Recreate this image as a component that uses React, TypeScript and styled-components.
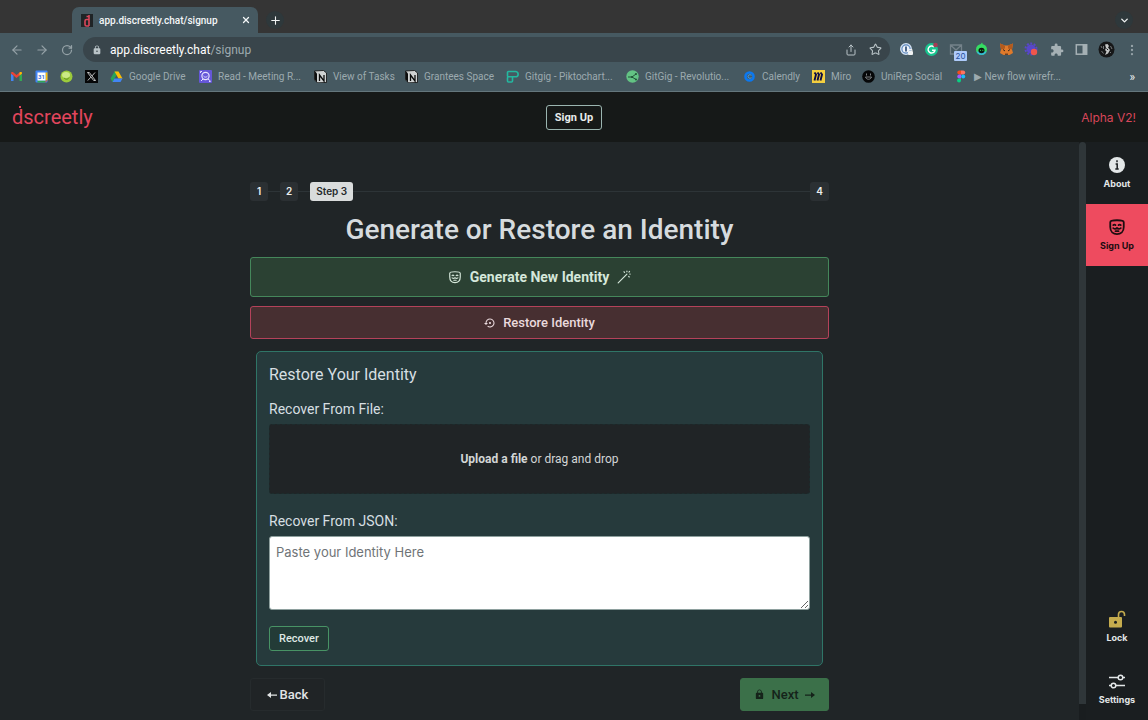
import React from "react";
import styled, { createGlobalStyle } from "styled-components";
import { ArrowLeft, ArrowRight, ChevronDown, MoreVertical, Plus, RotateCw, Share, Star, X } from "lucide-react";
import { MdExtension, MdLock, MdSettingsBackupRestore } from "react-icons/md";

const ui = `Inter, "Liberation Sans", sans-serif`;
const square = `Roboto, "Liberation Sans", sans-serif`;

const GlobalStyle = createGlobalStyle`
  *, *::before, *::after { box-sizing: border-box; }
  body { margin: 0; background: #202527; font-family: ${square}; color: #dfe3e4; }
  button, textarea, input { font-family: inherit; }
  button { cursor: pointer; }
  svg { flex: none; display: block; }
`;

const Shell = styled.div`
  display: flex;
  flex-direction: column;
  min-height: 100vh;
`;

/* ---------- browser frame ---------- */

const TabStrip = styled.div`
  display: flex;
  align-items: flex-end;
  height: 33px;
  padding: 0 15px 0 72px;
  background: #353535;
`;

const Tab = styled.div`
  display: flex;
  align-items: center;
  gap: 6px;
  width: 186px;
  height: 26px;
  padding: 0 4px 0 9px;
  border-radius: 7px 7px 0 0;
  background: #465961;
  color: #f4f7f8;
  font: 500 10px ${square};
`;

const TabTitle = styled.span`
  flex: 1;
  white-space: nowrap;
`;

const StripButton = styled.button<{ $push?: boolean }>`
  display: flex;
  align-items: center;
  justify-content: center;
  width: 18px;
  height: 18px;
  margin: 0 0 4px ${(p) => (p.$push ? "auto" : "8px")};
  padding: 0;
  border: 0;
  border-radius: 50%;
  background: #2e383b;
  color: #f0f3f3;
`;

const PlainButton = styled.button`
  display: flex;
  align-items: center;
  justify-content: center;
  flex: none;
  width: 17px;
  height: 17px;
  padding: 0;
  border: 0;
  background: none;
  color: inherit;
`;

const Toolbar = styled.div`
  display: flex;
  align-items: center;
  gap: 8px;
  height: 33px;
  padding: 0 8px;
  background: #465961;
  color: #95a2a7;
`;

const Omnibox = styled.div`
  display: flex;
  align-items: center;
  flex: 1;
  gap: 8px;
  height: 25px;
  padding: 0 6px 0 9px;
  border-radius: 13px;
  background: #39454b;
  color: #b9c3c7;
`;

const Address = styled.div`
  flex: 1;
  font: 400 12px ${square};
  color: #9eabb0;

  b { font-weight: 400; color: #fff; }
`;

const BookmarkBar = styled.nav`
  display: flex;
  align-items: center;
  gap: 12px;
  height: 26px;
  padding: 0 13px 4px 10px;
  border-bottom: 1px solid #64767c;
  background: #465961;
  font: 400 10px ${square};
  color: #9caaaf;
`;

const Bookmark = styled.a<{ $width?: number }>`
  display: flex;
  align-items: center;
  flex: none;
  gap: 6px;
  width: ${(p) => (p.$width ? `${p.$width}px` : "13px")};
  color: inherit;
  text-decoration: none;
  white-space: nowrap;
`;

const More = styled.span`
  margin-left: auto;
  color: #f0f3f3;
  font-size: 12px;
`;

/* ---------- app ---------- */

const Header = styled.header`
  display: grid;
  grid-template-columns: 1fr auto 1fr;
  align-items: center;
  height: 50px;
  padding: 0 12px;
  background: #161918;
`;

const Brand = styled.a`
  position: relative;
  justify-self: start;
  color: #e2465d;
  font-size: 20px;
  line-height: 24px;
  text-decoration: none;

  &::before {
    content: "";
    position: absolute;
    top: 1px;
    left: 7px;
    width: 2px;
    height: 2px;
    background: currentColor;
  }
`;

const HeaderButton = styled.button`
  height: 25px;
  padding: 0 8px;
  border: 1px solid #9bb5b0;
  border-radius: 3px;
  background: #161918;
  color: #e8eceb;
  font-size: 11px;
  font-weight: 700;
`;

const Version = styled.span`
  justify-self: end;
  color: #d8465a;
  font: 400 12px ${ui};
`;

const Body = styled.div`
  display: flex;
  flex: 1;
`;

const Main = styled.main`
  flex: 1;
  padding: 40px 24px 8px;
`;

const ScrollTrack = styled.div`
  width: 7px;
  padding-bottom: 16px;
  background: #191d1f;
`;

const ScrollThumb = styled.div`
  height: 100%;
  border-radius: 4px 4px 0 0;
  background: #2f3639;
`;

const Rail = styled.aside`
  display: flex;
  flex-direction: column;
  width: 62px;
  background: #1a1e20;
`;

const RailItem = styled.a<{ $active?: boolean; $push?: boolean }>`
  display: flex;
  flex-direction: column;
  align-items: center;
  justify-content: center;
  gap: 3px;
  height: 62px;
  margin-top: ${(p) => (p.$push ? "auto" : "0")};
  background: ${(p) => (p.$active ? "#ee4b5f" : "transparent")};
  color: ${(p) => (p.$active ? "#1d0d10" : "#e3e7e8")};
  font: 700 9px/14px ${ui};
  text-decoration: none;
`;

const Column = styled.div`
  display: flex;
  flex-direction: column;
  max-width: 579px;
  margin: 0 auto;
`;

const Stepper = styled.ol`
  display: flex;
  align-items: center;
  margin: 0;
  padding: 0;
  list-style: none;
`;

const Step = styled.li<{ $current?: boolean; $last?: boolean }>`
  display: flex;
  align-items: center;
  flex: ${(p) => (p.$current ? 1 : "none")};

  &::after {
    content: "";
    display: ${(p) => (p.$last ? "none" : "block")};
    flex: ${(p) => (p.$current ? 1 : "none")};
    width: 12px;
    height: 1px;
    background: #2d3437;
  }
`;

const StepBadge = styled.span<{ $current?: boolean }>`
  min-width: 18px;
  padding: 0 6px;
  border-radius: 3px;
  background: ${(p) => (p.$current ? "#d9dcdc" : "#2b3033")};
  color: ${(p) => (p.$current ? "#25292b" : "#eceeee")};
  font: 600 10px/19px ${ui};
  text-align: center;
`;

const Title = styled.h1`
  margin: 9px 0 7px;
  font-size: 28px;
  font-weight: 500;
  line-height: 40px;
  text-align: center;
  color: #d6dbde;
`;

const Choice = styled.button<{ $tone: "green" | "red" }>`
  display: flex;
  align-items: center;
  justify-content: center;
  gap: ${(p) => (p.$tone === "green" ? 8 : 7)}px;
  height: ${(p) => (p.$tone === "green" ? 40 : 33)}px;
  margin-bottom: ${(p) => (p.$tone === "green" ? 9 : 12)}px;
  border: 1px solid ${(p) => (p.$tone === "green" ? "#45875b" : "#b4425a")};
  border-radius: 3px;
  background: ${(p) => (p.$tone === "green" ? "#2b4133" : "#472f31")};
  color: ${(p) => (p.$tone === "green" ? "#d5e7da" : "#eadadd")};
  font-size: ${(p) => (p.$tone === "green" ? 14 : 13)}px;
  font-weight: ${(p) => (p.$tone === "green" ? 700 : 500)};
`;

const Card = styled.section`
  display: flex;
  flex-direction: column;
  align-items: flex-start;
  margin: 0 6px 12px;
  padding: 12px 12px 14px;
  border: 1px solid #2f7567;
  border-radius: 5px;
  background: #263a3c;
  color: #d6dfe2;
`;

const CardTitle = styled.h2`
  margin: 0 0 12px;
  font-size: 16px;
  font-weight: 400;
  line-height: 22px;
`;

const FieldLabel = styled.label`
  margin-bottom: 4px;
  font-size: 14px;
  line-height: 22px;
`;

const DropZone = styled.label`
  display: flex;
  align-items: center;
  justify-content: center;
  gap: 3px;
  align-self: stretch;
  height: 70px;
  margin-bottom: 16px;
  border: 1px dashed #1c2b2c;
  border-radius: 3px;
  background: #202426;
  color: #d3d6d6;
  font-size: 12px;
  cursor: pointer;

  b { font-weight: 700; }
`;

const HiddenFile = styled.input`
  position: absolute;
  width: 1px;
  height: 1px;
  opacity: 0;
`;

const JsonBox = styled.textarea`
  display: block;
  align-self: stretch;
  height: 74px;
  margin-bottom: 16px;
  padding: 6px;
  border: 1px solid #8ea09e;
  border-radius: 3px;
  background: #fff;
  font: 400 13px/18px ${ui};
  resize: vertical;

  &::placeholder { color: #6f7477; }
`;

const RecoverButton = styled.button`
  height: 25px;
  padding: 0 9px;
  border: 1px solid #489365;
  border-radius: 3px;
  background: #233b37;
  color: #dfe8e5;
  font-size: 11px;
  font-weight: 500;
`;

const Footer = styled.div`
  display: flex;
  justify-content: space-between;
`;

const NavButton = styled.button<{ $primary?: boolean }>`
  display: flex;
  align-items: center;
  justify-content: center;
  gap: ${(p) => (p.$primary ? 6 : 3)}px;
  min-width: ${(p) => (p.$primary ? 89 : 75)}px;
  height: 33px;
  border: 1px solid ${(p) => (p.$primary ? "#3b7049" : "#262b2d")};
  border-radius: 3px;
  background: ${(p) => (p.$primary ? "#3b7049" : "#202426")};
  color: ${(p) => (p.$primary ? "#15231a" : "#e2e5e6")};
  font-size: 13px;
  font-weight: 500;
`;

/* ---------- drawings ---------- */

const MaskIcon = ({ size, weight = 2 }: { size: number; weight?: number }) => (
  <svg width={size} height={size} viewBox="0 0 24 24" fill="none" stroke="currentColor" strokeWidth={weight} strokeLinecap="round" strokeLinejoin="round">
    <path d="M3 5.500C3 3.500 5 3 12 3s9 .5 9 2.500V12c0 6-4 9.500-9 9.500S3 18 3 12Z" />
    <path d="M7 9.500c.8-.9 2.200-.9 3 0M14 9.500c.8-.9 2.200-.9 3 0M7 13.500c2 1.500 4 .8 5-.3 1 1.100 3 1.800 5 .3M10 17.500h4" />
  </svg>
);

const WandIcon = () => (
  <svg width="14" height="14" viewBox="0 0 24 24" fill="none" stroke="currentColor" strokeWidth="2" strokeLinecap="round">
    <path d="M2 22 17 7M12 3l1 1M20 11l1 1M17 2v1M22.500 7H22M21.500 2.500 20.500 3.500" />
  </svg>
);

const InfoIcon = () => (
  <svg width="18" height="18" viewBox="0 0 18 18">
    <circle cx="9" cy="9" r="8" fill="currentColor" />
    <path d="M9 4.300v2M7.600 8H9.200v5M7.300 13h3.400" stroke="#1a1e20" strokeWidth="1.500" fill="none" />
  </svg>
);

const OpenLockIcon = () => (
  <svg width="18" height="18" viewBox="0 0 18 18">
    <path d="M10.500 7V4.500a3 3 0 0 1 6 0V6" fill="none" stroke="#c5ac4e" strokeWidth="1.600" />
    <rect x="1" y="7" width="13" height="10.500" rx="1" fill="#c5ac4e" />
    <circle cx="7.500" cy="12.200" r="1.500" fill="#1a1e20" />
  </svg>
);

const SlidersIcon = () => (
  <svg width="18" height="18" viewBox="0 0 18 18" fill="none" stroke="currentColor" strokeWidth="1.500">
    <path d="M1 5.500h9M15 5.500h2M1 13.500h2M8 13.500h9" />
    <circle cx="12.500" cy="5.500" r="2.300" />
    <circle cx="5.500" cy="13.500" r="2.300" />
  </svg>
);

const SmallArrow = ({ back }: { back?: boolean }) => (
  <svg width="10" height="8" viewBox="0 0 10 8" fill="currentColor">
    <path d={back ? "M0 4 4 1v2.400h6v1.300H4V7Z" : "M10 4 6 1v2.400H0v1.300h6V7Z"} />
  </svg>
);

const Favicon = () => (
  <svg width="12" height="13" viewBox="0 0 12 13">
    <rect width="12" height="13" fill="#1f2426" />
    <path d="M8 1v11M8 5.500H5.500a1.500 1.500 0 0 0-1.500 1.500v3.500A1.500 1.500 0 0 0 5.500 12H8M5.500 2.500h3" fill="none" stroke="#d9465b" strokeWidth="1.600" />
  </svg>
);

const Mark = ({ children }: { children: React.ReactNode }) => (
  <svg width="13" height="13" viewBox="0 0 13 13" fill="none">{children}</svg>
);

const Gmail = () => (
  <Mark>
    <path d="M1 11V3.500l2.500 2V11Z" fill="#4285f4" />
    <path d="M9.500 11V5.500l2.500-2V11Z" fill="#34a853" />
    <path d="M1 3.500C1 2 2.500 1.800 3.500 2.500l3 2.400 3-2.400C10.500 1.800 12 2 12 3.500L6.500 8Z" fill="#ea4335" />
    <path d="M9.500 2.500C10.500 1.800 12 2 12 3.500l-2.500 2Z" fill="#fbbc04" />
  </Mark>
);

const Calendar = () => (
  <Mark>
    <rect x=".5" y=".5" width="12" height="12" rx="1" fill="#4285f4" />
    <path d="M10.500 2.500h2v8h-2Z" fill="#fbbc04" />
    <path d="M2.500 10.500h8v2h-8Z" fill="#34a853" />
    <path d="M10.500 10.500h2l-2 2Z" fill="#ea4335" />
    <rect x="2.500" y="2.500" width="8" height="8" fill="#fff" />
    <text x="6.500" y="8.800" fontSize="6" fontWeight="700" textAnchor="middle" fill="#3972d9" fontFamily="Roboto, sans-serif">31</text>
  </Mark>
);

const Lime = () => (
  <Mark>
    <circle cx="6.500" cy="6.500" r="6" fill="#9ccb3b" />
    <ellipse cx="6" cy="5" rx="4" ry="3" fill="#cbe986" />
    <path d="M4 8c2 2 4 1.500 5-.5" stroke="#5f8f22" />
  </Mark>
);

const XMark = () => (
  <Mark>
    <rect width="13" height="13" fill="#060708" />
    <path d="M2.500 2.500h1.800l6.200 8H8.700ZM10 2.500l-3 3.400M5.800 7.200l-3 3.300" stroke="#e8eaea" strokeWidth=".8" />
  </Mark>
);

const Drive = () => (
  <Mark>
    <path d="M4.500 1.500h4L4 9.500l-1.500 2.500L.5 8.500Z" fill="#28a35a" />
    <path d="M4.500 1.500h4l4 7h-4Z" fill="#fbbc04" />
    <path d="M4.500 8.500h8l-2 3.500h-8Z" fill="#4285f4" />
  </Mark>
);

const ReadMark = () => (
  <Mark>
    <rect width="13" height="13" rx="1" fill="#6557d8" />
    <circle cx="6.500" cy="6" r="3.600" stroke="#e6e3ff" strokeWidth="1.200" />
    <path d="M4.500 6c1 1.500 3 1.500 4 0M2 11l2-2M9 9l2.500 2M1.500 3V1.500H3M10 11.500h1.500" stroke="#e6e3ff" />
  </Mark>
);

const Notion = () => (
  <Mark>
    <path d="M.5 1 9.500.5l3 2.500v9.500l-9 .3-3-3Z" fill="#cfd2d2" stroke="#0c0d0d" strokeWidth=".8" />
    <path d="M.8 1 3 3.500v9L.8 9.500Z" fill="#0c0d0d" />
    <path d="M5.500 11V5l4.500 6V5" stroke="#0c0d0d" strokeWidth="1.300" />
  </Mark>
);

const Pikto = () => (
  <Mark>
    <path d="M1.500 6.500v-4a1 1 0 0 1 1-1H9.500a2.500 2.500 0 0 1 0 5.300H2.500a1 1 0 0 0-1 1V11a1 1 0 0 0 1 1h3a1 1 0 0 0 1-1V6.800" stroke="#24b8a0" strokeWidth="1.600" />
  </Mark>
);

const GitGig = () => (
  <Mark>
    <circle cx="6.500" cy="6.500" r="6.200" fill="#63c384" />
    <path d="M2 7h4l4-3M6 7l4 2.500" stroke="#225238" />
    <circle cx="6" cy="7" r="1.100" fill="#225238" />
    <circle cx="10" cy="4" r="1" fill="#225238" />
    <circle cx="10" cy="9.500" r="1" fill="#225238" />
  </Mark>
);

const Calendly = () => (
  <Mark>
    <circle cx="6.500" cy="6.500" r="4" stroke="#0b78f0" strokeWidth="2.600" />
    <path d="M8.500 5.300c-1.500-1-3.500-.6-3.500 1.200s2 2.200 3.500 1.200" stroke="#3fa6ff" />
  </Mark>
);

const Miro = () => (
  <Mark>
    <rect width="13" height="13" fill="#f4cf3f" />
    <path d="m2.500 2.500 1.500 2-1.500 6M5.500 2.500l1.500 2-1.500 6M8.500 2.500l1.500 2-1.500 6" stroke="#0b0b45" strokeWidth="1.900" />
  </Mark>
);

const UniRep = () => (
  <Mark>
    <circle cx="6.500" cy="6.500" r="6.300" fill="#060708" />
    <path d="M4.500 3.500v2M8.500 3.500v2M3.500 7c.8 3 5.200 3 6 0Z" stroke="#8c9193" strokeWidth=".9" />
  </Mark>
);

const Figma = () => (
  <Mark>
    <path d="M6 .5H4.300a2 2 0 0 0 0 4H6Z" fill="#f24e1e" />
    <path d="M6 .5h2.200a2 2 0 0 1 0 4H6Z" fill="#ff7262" />
    <path d="M6 4.500H4.300a2 2 0 0 0 0 4H6Z" fill="#a259ff" />
    <circle cx="8.200" cy="6.500" r="2" fill="#1abcfe" />
    <path d="M6 8.500H4.300a2 2 0 1 0 1.700 2Z" fill="#0acf83" />
  </Mark>
);

const ExtIcon = ({ children }: { children: React.ReactNode }) => (
  <svg width="17" height="17" viewBox="0 0 17 17" fill="none" overflow="visible">{children}</svg>
);

const OnePassword = () => (
  <ExtIcon>
    <circle cx="8" cy="8" r="5.300" fill="#5b87bd" stroke="#d5e3f3" strokeWidth="1.300" />
    <circle cx="8" cy="8" r="3.500" fill="#eef4fb" />
    <path d="M8 5.500v5" stroke="#24446d" strokeWidth="1.600" />
    <rect x="10" y="10" width="5" height="4" rx="1" fill="#eef1f2" />
    <path d="M11 10V8.500h3V10" stroke="#eef1f2" />
  </ExtIcon>
);

const Grammarly = () => (
  <ExtIcon>
    <circle cx="8.500" cy="8.500" r="6.500" fill="#18c48f" />
    <path d="M11 6a3.500 3.500 0 1 0 1 3.300H9" stroke="#fff" strokeWidth="1.400" />
    <circle cx="12.500" cy="4" r="2.300" fill="#a63b54" />
  </ExtIcon>
);

const MailBadge = () => (
  <ExtIcon>
    <path d="M2.500 4h11v9h-11ZM2.500 4 8 9l5.500-5" stroke="#74828a" strokeWidth="1.300" />
    <rect x="6" y="10" width="13" height="10" rx="1" fill="#aecbfa" />
    <text x="12.500" y="17.800" textAnchor="middle" fontSize="8" fill="#27509b" fontFamily="Inter, sans-serif">20</text>
  </ExtIcon>
);

const GreenFace = () => (
  <ExtIcon>
    <circle cx="8.500" cy="8.500" r="5.500" fill="#35dd62" />
    <path d="M3.500 10.500A5.500 5.500 0 0 0 8.500 14a5.500 5.500 0 0 0 5-3.500Z" fill="#35b9d5" />
    <path d="M7.500 3.500 9 1.500l1 2" fill="#35dd62" />
    <ellipse cx="8.500" cy="9.500" rx="3" ry="2.800" fill="#0c1710" />
    <path d="M7 9.300h1M9.300 9.300h1" stroke="#35dd62" />
  </ExtIcon>
);

const Fox = () => (
  <ExtIcon>
    <path d="m2 2.500 5 2h3l5-2-1 6 1 3.500-3.500 2H5.500L2 12l1-3.500Z" fill="#df7a2b" />
    <path d="m2 2.500 5 2v3l-4 1ZM15 2.500l-5 2v3l4 1Z" fill="#b35a1d" />
    <path d="M5 8.500 7 10M12 8.500 10 10M7 13.200h3" stroke="#39241a" />
  </ExtIcon>
);

const PurpleGear = () => (
  <ExtIcon>
    <circle cx="8" cy="8" r="4.500" fill="#5747c9" />
    <circle cx="8" cy="8" r="5.500" stroke="#5747c9" strokeWidth="2" strokeDasharray="2 1.500" />
    <circle cx="11" cy="11" r="3.200" fill="#f0564c" />
  </ExtIcon>
);

const SidePanel = () => (
  <ExtIcon>
    <rect x="3.300" y="3.800" width="10.400" height="9.400" stroke="#a5b0b4" strokeWidth="1.500" />
    <path d="M9.500 3.500H14v10H9.500Z" fill="#a5b0b4" />
  </ExtIcon>
);

const Avatar = () => (
  <ExtIcon>
    <circle cx="8.500" cy="8.500" r="8" fill="#161718" />
    <path d="M7 3.500 9.500 3l1.500 2-1 1.500L12 9l-2 3.500-3 1.500 1.500-3.500L7 9l1-2Z" fill="#c4c6c6" />
    <path d="M3 5l1 2M3.500 10l2 2.500M12.500 5l1.500 3M12 12l1-1M5.500 5v3" stroke="#77797a" />
    <path d="M8.500 7.500 10 9" stroke="#161718" />
  </ExtIcon>
);

/* ---------- data ---------- */

const bookmarks: { icon: React.ReactNode; name: string; label?: string; width?: number }[] = [
  { icon: <Gmail />, name: "Gmail" },
  { icon: <Calendar />, name: "Calendar" },
  { icon: <Lime />, name: "Lime" },
  { icon: <XMark />, name: "X" },
  { icon: <Drive />, name: "Drive", label: "Google Drive", width: 77 },
  { icon: <ReadMark />, name: "Read", label: "Read - Meeting R...", width: 103 },
  { icon: <Notion />, name: "Tasks", label: "View of Tasks", width: 79 },
  { icon: <Notion />, name: "Grantees", label: "Grantees Space", width: 89 },
  { icon: <Pikto />, name: "Piktochart", label: "Gitgig - Piktochart...", width: 108 },
  { icon: <GitGig />, name: "GitGig", label: "GitGig - Revolutio...", width: 105 },
  { icon: <Calendly />, name: "Calendly", label: "Calendly", width: 57 },
  { icon: <Miro />, name: "Miro", label: "Miro", width: 38 },
  { icon: <UniRep />, name: "UniRep", label: "UniRep Social", width: 81 },
  { icon: <Figma />, name: "Figma", label: "▶ New flow wirefr...", width: 106 },
];

const extensions = [OnePassword, Grammarly, MailBadge, GreenFace, Fox, PurpleGear];

export default function App() {
  return (
    <Shell>
      <GlobalStyle />
      <TabStrip>
        <Tab>
          <Favicon />
          <TabTitle>app.discreetly.chat/signup</TabTitle>
          <PlainButton aria-label="Close tab"><X size={10} strokeWidth={3} /></PlainButton>
        </Tab>
        <StripButton aria-label="New tab"><Plus size={13} /></StripButton>
        <StripButton $push aria-label="Search tabs"><ChevronDown size={11} strokeWidth={3} /></StripButton>
      </TabStrip>

      <Toolbar>
        <PlainButton aria-label="Back"><ArrowLeft size={14} /></PlainButton>
        <PlainButton aria-label="Forward"><ArrowRight size={14} /></PlainButton>
        <PlainButton aria-label="Reload"><RotateCw size={12} strokeWidth={2.500} /></PlainButton>
        <Omnibox>
          <MdLock size={10} />
          <Address><b>app.discreetly.chat</b>/signup</Address>
          <PlainButton aria-label="Share"><Share size={12} /></PlainButton>
          <PlainButton aria-label="Bookmark"><Star size={13} /></PlainButton>
        </Omnibox>
        {extensions.map((Ext, i) => (
          <PlainButton key={i} aria-label={`Extension ${i + 1}`}><Ext /></PlainButton>
        ))}
        <PlainButton aria-label="Extensions"><MdExtension size={14} color="#a5b0b4" /></PlainButton>
        <PlainButton aria-label="Side panel"><SidePanel /></PlainButton>
        <PlainButton aria-label="Profile"><Avatar /></PlainButton>
        <PlainButton aria-label="Menu"><MoreVertical size={14} /></PlainButton>
      </Toolbar>

      <BookmarkBar>
        {bookmarks.map((b) => (
          <Bookmark key={b.name} href="#" aria-label={b.name} $width={b.width}>
            {b.icon}
            {b.label}
          </Bookmark>
        ))}
        <More>»</More>
      </BookmarkBar>

      <Header>
        <Brand href="#">dscreetly</Brand>
        <HeaderButton>Sign Up</HeaderButton>
        <Version>Alpha V2!</Version>
      </Header>

      <Body>
        <Main>
          <Column>
            <Stepper>
              <Step><StepBadge>1</StepBadge></Step>
              <Step><StepBadge>2</StepBadge></Step>
              <Step $current><StepBadge $current>Step 3</StepBadge></Step>
              <Step $last><StepBadge>4</StepBadge></Step>
            </Stepper>
            <Title>Generate or Restore an Identity</Title>
            <Choice $tone="green"><MaskIcon size={14} />Generate New Identity<WandIcon /></Choice>
            <Choice $tone="red"><MdSettingsBackupRestore size={12} />Restore Identity</Choice>
            <Card>
              <CardTitle>Restore Your Identity</CardTitle>
              <FieldLabel htmlFor="identity-file">Recover From File:</FieldLabel>
              <DropZone>
                <HiddenFile id="identity-file" type="file" />
                <b>Upload a file</b> or drag and drop
              </DropZone>
              <FieldLabel htmlFor="identity-json">Recover From JSON:</FieldLabel>
              <JsonBox id="identity-json" placeholder="Paste your Identity Here" />
              <RecoverButton>Recover</RecoverButton>
            </Card>
            <Footer>
              <NavButton><SmallArrow back />Back</NavButton>
              <NavButton $primary><MdLock size={11} />Next<SmallArrow /></NavButton>
            </Footer>
          </Column>
        </Main>
        <ScrollTrack><ScrollThumb /></ScrollTrack>
        <Rail>
          <RailItem href="#"><InfoIcon />About</RailItem>
          <RailItem href="#" $active><MaskIcon size={18} weight={2.400} />Sign Up</RailItem>
          <RailItem href="#" $push><OpenLockIcon />Lock</RailItem>
          <RailItem href="#"><SlidersIcon />Settings</RailItem>
        </Rail>
      </Body>
    </Shell>
  );
}
